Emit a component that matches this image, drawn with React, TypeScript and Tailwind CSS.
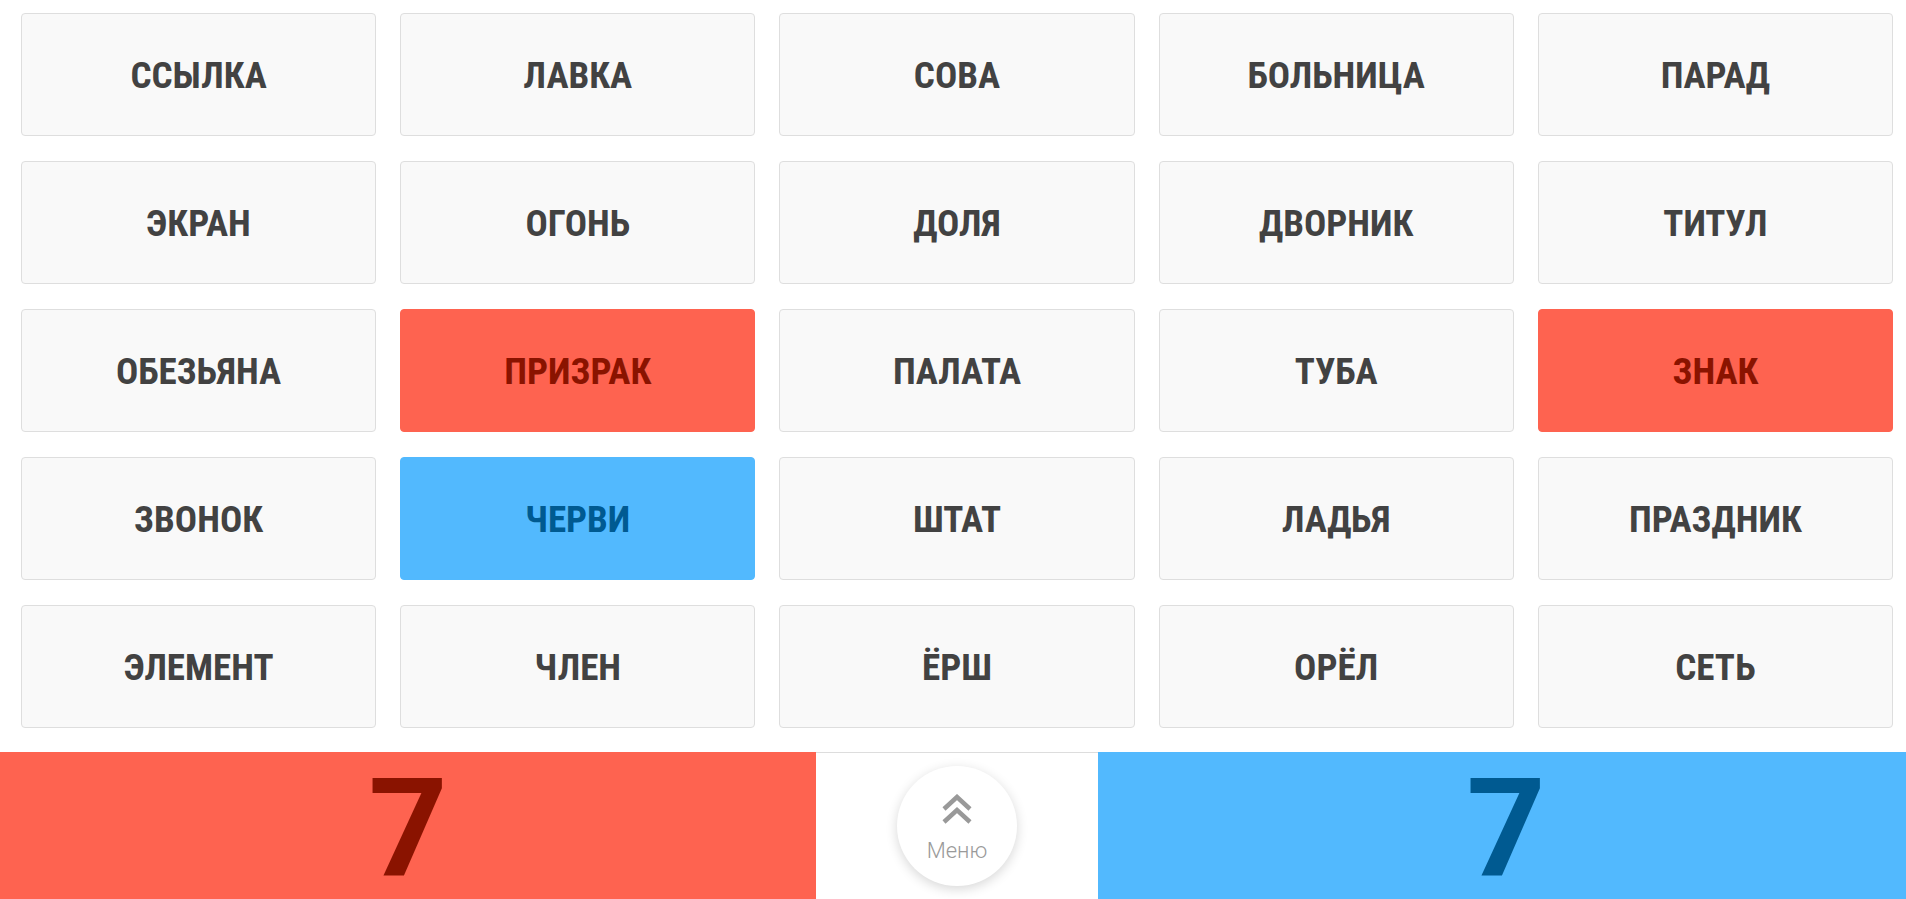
import React from "react";

type Kind = "n" | "r" | "b";
const words: [string, Kind][] = [
  ["ССЫЛКА", "n"], ["ЛАВКА", "n"], ["СОВА", "n"], ["БОЛЬНИЦА", "n"], ["ПАРАД", "n"],
  ["ЭКРАН", "n"], ["ОГОНЬ", "n"], ["ДОЛЯ", "n"], ["ДВОРНИК", "n"], ["ТИТУЛ", "n"],
  ["ОБЕЗЬЯНА", "n"], ["ПРИЗРАК", "r"], ["ПАЛАТА", "n"], ["ТУБА", "n"], ["ЗНАК", "r"],
  ["ЗВОНОК", "n"], ["ЧЕРВИ", "b"], ["ШТАТ", "n"], ["ЛАДЬЯ", "n"], ["ПРАЗДНИК", "n"],
  ["ЭЛЕМЕНТ", "n"], ["ЧЛЕН", "n"], ["ЁРШ", "n"], ["ОРЁЛ", "n"], ["СЕТЬ", "n"],
];

function Card({ word, kind }: { word: string; kind: Kind }) {
  const cls =
    kind === "r"
      ? "bg-[#fe6350] border-[#fe6350] text-[#8a1300]"
      : kind === "b"
      ? "bg-[#52b9fe] border-[#52b9fe] text-[#005a91]"
      : "bg-[#f9f9f9] border-[#dedede] text-[#424242]";
  return (
    <div
      className={`h-[123px] rounded-[4px] border flex items-center justify-center pt-[3px] text-[37px] font-bold uppercase ${cls}`}
    >
      {word}
    </div>
  );
}

export default function App() {
  return (
    <div
      className="w-[1906px] h-[899px] bg-white flex flex-col overflow-hidden"
      style={{ fontFamily: '"Roboto Condensed", Roboto, "Liberation Sans", sans-serif' }}
    >
      <div className="grid grid-cols-5 gap-x-[24px] gap-y-[25px] pl-[21px] pr-[13px] pt-[13px]">
        {words.map(([w, k]) => (
          <Card key={w} word={w} kind={k} />
        ))}
      </div>
      <div className="mt-[24px] flex h-[147px]" style={{ fontFamily: 'Roboto, "Liberation Sans", sans-serif' }}>
        <div className="w-[816px] bg-[#fe6350] flex items-center justify-center text-[138px] font-bold text-[#8a1300] leading-[110px] pt-[6px]">
          7
        </div>
        <div className="w-[282px] border-t border-[#dddddd] bg-white flex items-center justify-center">
          <div className="w-[120px] h-[120px] rounded-full bg-white shadow-[0_3px_12px_rgba(0,0,0,0.16)] flex flex-col items-center justify-center pt-[4px]">
            <svg width="32" height="31" viewBox="0 0 32 31" fill="none" stroke="#999999" strokeWidth="4.5" strokeLinecap="butt" strokeLinejoin="miter">
              <polyline points="3,15 16,3 29,15" />
              <polyline points="3,28 16,16 29,28" />
            </svg>
            <div className="text-[22px] font-light text-[#9a9a9a] leading-none mt-[15px]">
              Меню
            </div>
          </div>
        </div>
        <div className="flex-1 bg-[#52b9fe] flex items-center justify-center text-[138px] font-bold text-[#005a91] leading-[110px] pt-[6px] pl-[8px]">
          7
        </div>
      </div>
    </div>
  );
}
